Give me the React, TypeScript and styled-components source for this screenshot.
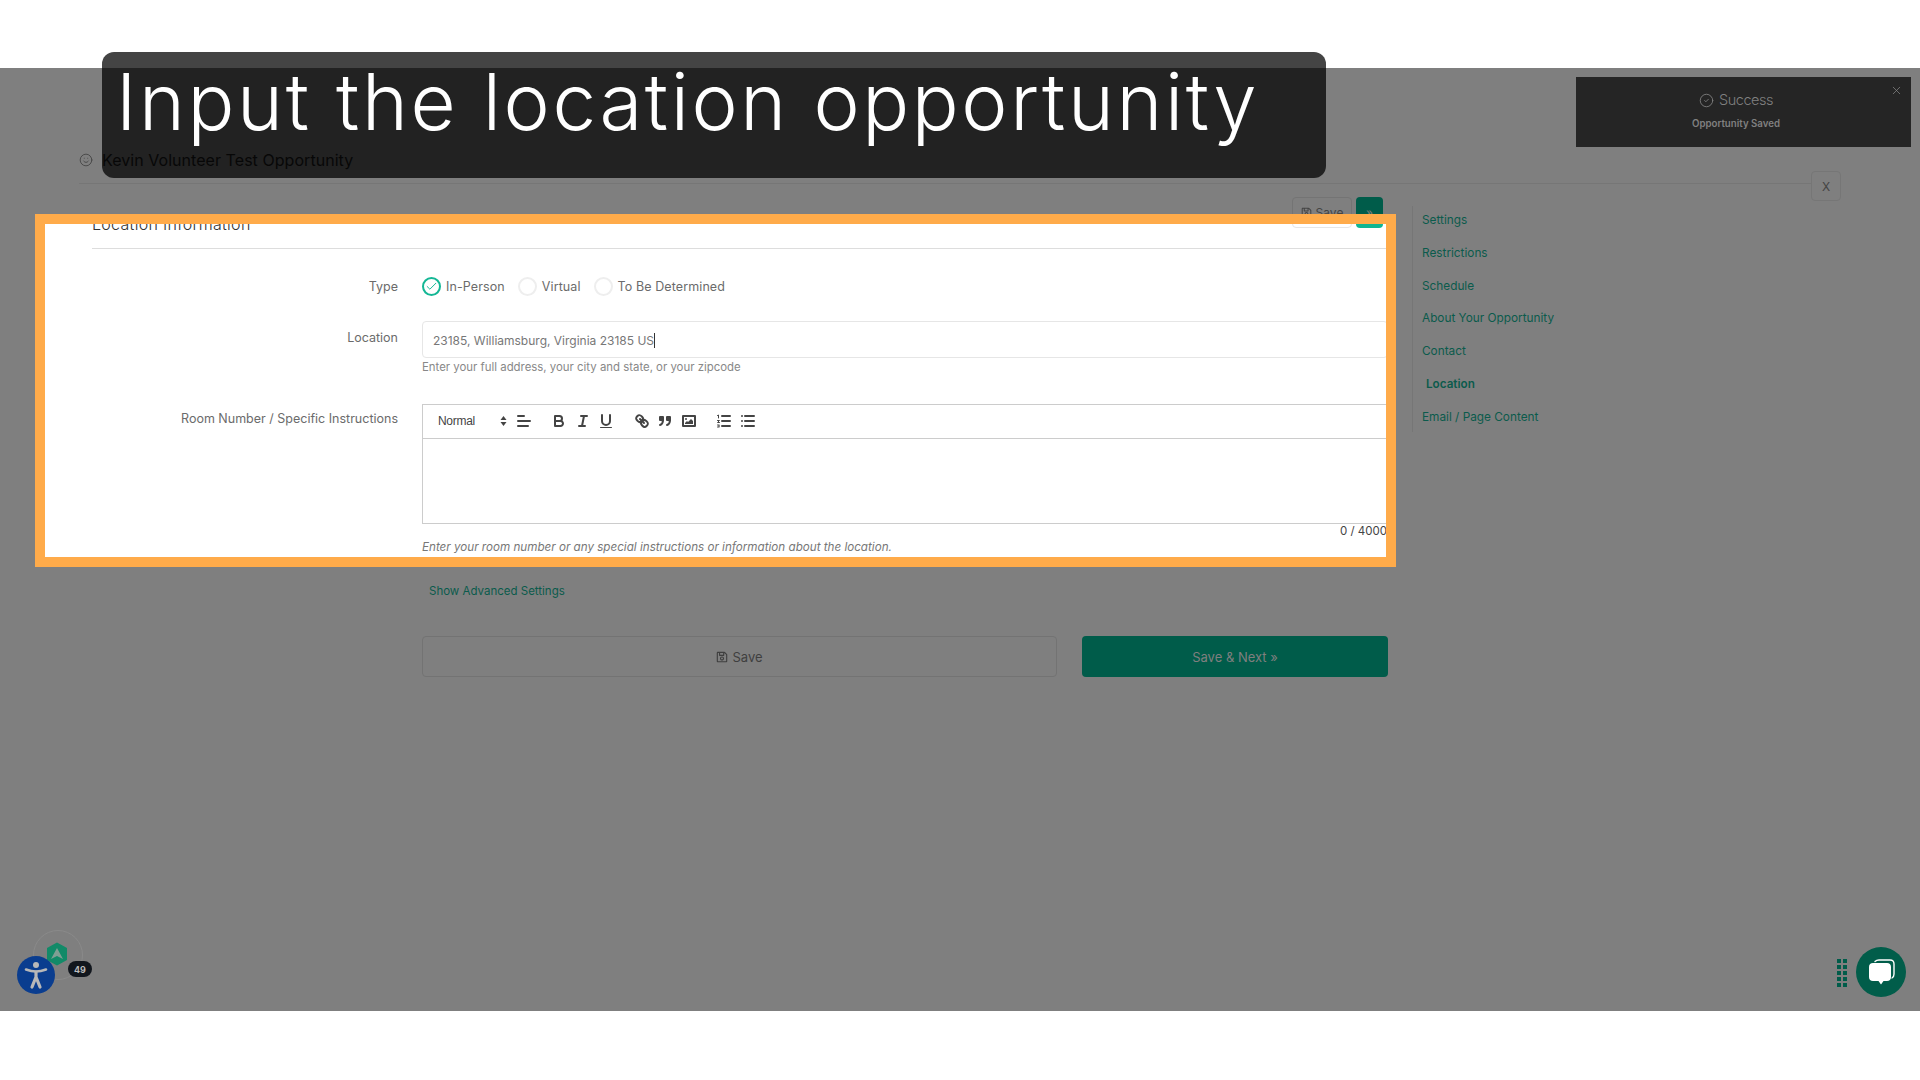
import type { FC } from 'react';
import styled, { createGlobalStyle } from 'styled-components';
import { Check, CircleCheck, Smile, X } from 'lucide-react';
import { FaRegSave } from 'react-icons/fa';

const FONT = `Inter, 'Noto Sans', sans-serif`;

const GlobalStyle = createGlobalStyle`
  html, body { margin: 0; padding: 0; background: #fff; }
  body { font-family: ${FONT}; }
`;

const NAV_ITEMS = [
  'Settings',
  'Restrictions',
  'Schedule',
  'About Your Opportunity',
  'Contact',
  'Location',
  'Email / Page Content',
];

const TYPE_OPTIONS = [
  { label: 'In-Person', checked: true },
  { label: 'Virtual', checked: false },
  { label: 'To Be Determined', checked: false },
];

const BoldIcon = () => (
  <QlIcon viewBox="0 0 18 18">
    <path d="M5,4H9.5A2.5,2.5,0,0,1,12,6.5v0A2.5,2.5,0,0,1,9.5,9H5A0,0,0,0,1,5,9V4A0,0,0,0,1,5,4Z" />
    <path d="M5,9h5.5A2.5,2.5,0,0,1,13,11.5v0A2.5,2.5,0,0,1,10.5,14H5a0,0,0,0,1,0,0V9A0,0,0,0,1,5,9Z" />
  </QlIcon>
);

const ItalicIcon = () => (
  <QlIcon viewBox="0 0 18 18">
    <path d="M7 4H13M5 14H11M8 14L10 4" />
  </QlIcon>
);

const UnderlineIcon = () => (
  <QlIcon viewBox="0 0 18 18">
    <path d="M5,3V9a4.012,4.012,0,0,0,4,4H9a4.012,4.012,0,0,0,4-4V3" />
    <rect x="3" y="15" width="12" height="1" rx="0.5" fill="#444" strokeWidth="0" />
  </QlIcon>
);

const LinkIcon = () => (
  <QlIcon viewBox="0 0 18 18">
    <path d="M7 7L11 11" />
    <path d="M8.9,4.577a3.476,3.476,0,0,1,.36,4.679A3.476,3.476,0,0,1,4.577,8.9C3.185,7.5,2.035,6.4,4.217,4.217S7.5,3.185,8.9,4.577Z" />
    <path d="M13.423,9.1a3.476,3.476,0,0,0-4.679-.36,3.476,3.476,0,0,0,.36,4.679c1.392,1.392,2.5,2.542,4.679.36S14.815,10.5,13.423,9.1Z" />
  </QlIcon>
);

const QuoteIcon = () => (
  <QlIcon viewBox="0 0 18 18">
    <rect x="4" y="5" width="3" height="3" fill="#444" />
    <rect x="11" y="5" width="3" height="3" fill="#444" />
    <path d="M7,8c0,4.031-3,5-3,5" />
    <path d="M14,8c0,4.031-3,5-3,5" />
  </QlIcon>
);

const ImageIcon = () => (
  <QlIcon viewBox="0 0 18 18">
    <rect x="3" y="4" width="12" height="10" />
    <circle cx="6" cy="7" r="1" fill="#444" strokeWidth="0" />
    <polygon points="5 12 5 11 7 9 8 10 11 7 13 9 13 12 5 12" fill="#444" strokeWidth="0" />
  </QlIcon>
);

const OrderedIcon = () => (
  <QlIcon viewBox="0 0 18 18">
    <path d="M7 4H15M7 9H15M7 14H15" />
    <path d="M2.5 3.5L3.5 3V6M2.5 8.5H4.5L2.5 10.5H4.5M2.5 13H4.5L3.5 14L4.5 15H2.5" strokeWidth="1" />
  </QlIcon>
);

const BulletIcon = () => (
  <QlIcon viewBox="0 0 18 18">
    <path d="M6 4H15M6 9H15M6 14H15M3 4H3M3 9H3M3 14H3" />
  </QlIcon>
);

const AlignIcon = () => (
  <QlIcon viewBox="0 0 18 18">
    <path d="M3 9H15M3 14H13M3 4H9" />
  </QlIcon>
);

const Editor: FC = () => (
  <EditorBox>
    <EditorToolbar>
      <HeaderPicker>
        Normal
        <svg width="7" height="12" viewBox="0 0 7 12">
          <path d="M3.5 1L6.5 5H0.5Z M3.5 11L0.5 7H6.5Z" fill="#444" />
        </svg>
      </HeaderPicker>
      <ToolGroup>
        <ToolButton><AlignIcon /></ToolButton>
      </ToolGroup>
      <ToolGroup>
        <ToolButton><BoldIcon /></ToolButton>
        <ToolButton><ItalicIcon /></ToolButton>
        <ToolButton><UnderlineIcon /></ToolButton>
      </ToolGroup>
      <ToolGroup>
        <ToolButton><LinkIcon /></ToolButton>
        <ToolButton><QuoteIcon /></ToolButton>
        <ToolButton><ImageIcon /></ToolButton>
      </ToolGroup>
      <ToolGroup>
        <ToolButton><OrderedIcon /></ToolButton>
        <ToolButton><BulletIcon /></ToolButton>
      </ToolGroup>
    </EditorToolbar>
  </EditorBox>
);

const HighlightedForm: FC = () => (
  <Highlight>
    <SectionHead>
      <SectionTitle>Location Information</SectionTitle>
      <HeadActions>
        <LightSave><FaRegSave size={11} /> Save</LightSave>
        <LightNext>»</LightNext>
      </HeadActions>
    </SectionHead>

    <TypeRow>
      <FieldLabel>Type</FieldLabel>
      <RadioList>
        {TYPE_OPTIONS.map((o) => (
          <RadioOption key={o.label}>
            <RadioCircle $checked={o.checked}>
              {o.checked && <Check size={13} strokeWidth={1.8} color="#14b795" />}
            </RadioCircle>
            {o.label}
          </RadioOption>
        ))}
      </RadioList>
    </TypeRow>

    <LocationRow>
      <FieldLabel $top={9}>Location</FieldLabel>
      <div>
        <TextField>
          23185, Williamsburg, Virginia 23185 US<Caret />
        </TextField>
        <Hint>Enter your full address, your city and state, or your zipcode</Hint>
      </div>
    </LocationRow>

    <RoomRow>
      <FieldLabel $top={7}>Room Number / Specific Instructions</FieldLabel>
      <div>
        <Editor />
        <Counter>0 / 4000</Counter>
        <ItalicHint>
          Enter your room number or any special instructions or information about the location.
        </ItalicHint>
      </div>
    </RoomRow>
  </Highlight>
);

export default function App() {
  return (
    <Page>
      <GlobalStyle />
      <TopBand />
      <Main>
        <PageHeader>
          <Smile size={14} color="#444" strokeWidth={1.5} />
          <PageTitle>Kevin Volunteer Test Opportunity</PageTitle>
        </PageHeader>
        <CloseBox>X</CloseBox>

        <Body>
          <LeftColumn>
            <DimActions>
              <DimSave><FaRegSave size={11} /> Save</DimSave>
              <DimNext>»</DimNext>
            </DimActions>

            <HighlightedForm />

            <AdvancedLink>Show Advanced Settings</AdvancedLink>
            <FormButtons>
              <SaveWide><FaRegSave size={12} /> Save</SaveWide>
              <SaveNext>Save &amp; Next »</SaveNext>
            </FormButtons>
          </LeftColumn>

          <SideNav>
            {NAV_ITEMS.map((item) => (
              <NavItem key={item} $active={item === 'Location'}>{item}</NavItem>
            ))}
          </SideNav>
        </Body>

        <ChatDots>
          {Array.from({ length: 10 }).map((_, i) => (
            <i key={i} />
          ))}
        </ChatDots>
        <ChatButton>
          <svg width="32" height="32" viewBox="0 0 32 32" fill="none">
            <path d="M10 5.5C11 4.5 12 4 14 4H25C27.5 4 29 5.5 29 8V18C29 20 28.3 21.3 27 22" stroke="#fff" strokeWidth="1.4" strokeLinecap="round" />
            <path d="M8 7H22C24.5 7 26 8.5 26 11V21C26 23.5 24.5 25 22 25H18.5L16 28.5L13.5 25H8C5.5 25 4 23.5 4 21V11C4 8.5 5.5 7 8 7Z" fill="#fff" />
          </svg>
        </ChatButton>

        <BadgeRing />
        <HexBadge>
          <svg width="22" height="24" viewBox="0 0 22 24">
            <path d="M11 0.5L21 6V18L11 23.5L1 18V6Z" fill="#128a68" />
            <path d="M11 6L17 17L11 14L5 17Z" fill="#7f9f94" />
          </svg>
        </HexBadge>
        <CountPill>49</CountPill>
        <AccessButton>
          <svg width="26" height="30" viewBox="0 0 26 30" fill="none" stroke="#b8b8b8" strokeLinecap="round">
            <circle cx="13" cy="5" r="3" fill="#b8b8b8" stroke="none" />
            <path d="M3 9.5C7 11 10 11.5 13 11.5C16 11.5 19 11 23 9.5" strokeWidth="2.6" />
            <path d="M13 12V17M13 17L9 27M13 17L17 27" strokeWidth="3.2" />
          </svg>
        </AccessButton>
      </Main>
      <BottomBand />

      <Caption>Input the location opportunity</Caption>
      <Toast>
        <ToastClose><X size={13} strokeWidth={1.3} /></ToastClose>
        <ToastTitle><CircleCheck size={15} strokeWidth={1.4} /> Success</ToastTitle>
        <ToastText>Opportunity Saved</ToastText>
      </Toast>
    </Page>
  );
}

const Page = styled.div`
  position: relative;
  width: 1920px;
  height: 1080px;
  display: flex;
  flex-direction: column;
  overflow: hidden;
`;

const TopBand = styled.div`
  height: 68px;
  background: #fff;
`;

const BottomBand = styled.div`
  height: 69px;
  background: #fff;
`;

const Main = styled.main`
  position: relative;
  flex: 1;
  background: #7f7f7f;
  padding-top: 76px;
`;

const PageHeader = styled.header`
  height: 40px;
  box-sizing: border-box;
  margin-left: 79px;
  margin-right: 109px;
  padding-bottom: 8px;
  display: flex;
  align-items: center;
  gap: 9px;
  border-bottom: 1px solid #767676;
`;

const PageTitle = styled.h1`
  margin: 0;
  font-size: 16px;
  font-weight: 400;
  color: #1c1c1c;
  letter-spacing: 0.05px;
`;

const CloseBox = styled.div`
  position: absolute;
  left: 1811px;
  top: 103px;
  width: 30px;
  height: 30px;
  box-sizing: border-box;
  border: 1px solid #767676;
  border-radius: 4px;
  display: flex;
  align-items: center;
  justify-content: center;
  font-size: 12px;
  color: #444;
`;

const Body = styled.div`
  display: flex;
  align-items: flex-start;
  padding-left: 35px;
`;

const LeftColumn = styled.div`
  width: 1361px;
  padding-top: 13px;
`;

const DimActions = styled.div`
  height: 17px;
  overflow: hidden;
  display: flex;
  justify-content: flex-end;
  gap: 4px;
  padding-right: 13px;
`;

const saveBase = `
  box-sizing: border-box;
  height: 31px;
  width: 60px;
  border-radius: 4px;
  display: flex;
  align-items: center;
  justify-content: center;
  gap: 4px;
  font-size: 12px;
`;

const nextBase = `
  box-sizing: border-box;
  height: 31px;
  width: 27px;
  border-radius: 4px;
  display: flex;
  align-items: center;
  justify-content: center;
  font-size: 12px;
`;

const DimSave = styled.div`
  ${saveBase}
  border: 1px solid #747474;
  color: #444;
`;

const DimNext = styled.div`
  ${nextBase}
  background: #005c4a;
  color: #7f7f7f;
`;

const Highlight = styled.section`
  box-sizing: border-box;
  height: 353px;
  border: 10px solid #ffab4a;
  background: #fff;
  overflow: hidden;
  padding-left: 47px;
`;

const SectionHead = styled.div`
  position: relative;
  margin-top: -27px;
  height: 52px;
  box-sizing: border-box;
  border-bottom: 1px solid #ddd;
  display: flex;
  justify-content: space-between;
  padding-right: 3px;
`;

const SectionTitle = styled.div`
  margin-top: 17px;
  font-size: 16px;
  line-height: 20px;
  font-weight: 300;
  color: #333;
  letter-spacing: 0.3px;
`;

const HeadActions = styled.div`
  display: flex;
  gap: 4px;
`;

const LightSave = styled.div`
  ${saveBase}
  border: 1px solid #e6e6e6;
  color: #777;
`;

const LightNext = styled.div`
  ${nextBase}
  background: #10b592;
  color: #fff;
`;

const FormRow = styled.div`
  display: grid;
  grid-template-columns: 306px 966px;
  column-gap: 24px;
`;

const TypeRow = styled(FormRow)`
  margin-top: 28px;
  align-items: center;
`;

const LocationRow = styled(FormRow)`
  margin-top: 25px;
`;

const RoomRow = styled(FormRow)`
  margin-top: 29px;
`;

const FieldLabel = styled.label<{ $top?: number }>`
  display: block;
  text-align: right;
  font-size: 12.5px;
  line-height: 16px;
  color: #6b6b6b;
  padding-top: ${(p) => p.$top ?? 0}px;
`;

const RadioList = styled.div`
  display: flex;
  align-items: center;
  gap: 13px;
`;

const RadioOption = styled.span`
  display: inline-flex;
  align-items: center;
  gap: 5px;
  font-size: 12.5px;
  line-height: 19px;
  color: #6b6b6b;
  letter-spacing: 0.1px;
`;

const RadioCircle = styled.span<{ $checked: boolean }>`
  box-sizing: border-box;
  width: 19px;
  height: 19px;
  border-radius: 50%;
  border: ${(p) => (p.$checked ? '2px solid #14b795' : '2px solid #eee')};
  display: flex;
  align-items: center;
  justify-content: center;
`;

const TextField = styled.div`
  box-sizing: border-box;
  height: 37px;
  border: 1px solid #e6e6e6;
  border-radius: 4px;
  padding-left: 10px;
  padding-top: 1px;
  display: flex;
  align-items: center;
  font-size: 12px;
  color: #777;
`;

const Caret = styled.span`
  width: 1px;
  height: 15px;
  background: #333;
`;

const Hint = styled.div`
  margin-top: 1px;
  font-size: 11.4px;
  line-height: 16px;
  color: #888;
`;

const EditorBox = styled.div`
  box-sizing: border-box;
  height: 120px;
  border: 1px solid #ccc;
  border-right: none;
`;

const EditorToolbar = styled.div`
  box-sizing: border-box;
  height: 34px;
  padding-bottom: 1px;
  border-bottom: 1px solid #ccc;
  display: flex;
  align-items: center;
  padding-left: 15px;
`;

const HeaderPicker = styled.div`
  width: 74px;
  box-sizing: border-box;
  padding-right: 5px;
  display: flex;
  align-items: center;
  justify-content: space-between;
  font-family: 'Liberation Sans', Arial, sans-serif;
  font-size: 12px;
  letter-spacing: -0.3px;
  color: #444;
`;

const ToolGroup = styled.div`
  display: flex;
  margin-right: 12px;
`;

const ToolButton = styled.span`
  width: 23.5px;
  height: 24px;
  display: flex;
  align-items: center;
  justify-content: center;
`;

const QlIcon = styled.svg`
  width: 18px;
  height: 18px;
  fill: none;
  stroke: #444;
  stroke-width: 2;
  stroke-linecap: round;
  stroke-linejoin: round;
`;

const Counter = styled.div`
  height: 15px;
  margin-top: -1px;
  margin-bottom: 1px;
  padding-right: 1px;
  text-align: right;
  font-size: 11.5px;
  line-height: 16px;
  color: #444;
`;

const ItalicHint = styled.div`
  font-size: 11.65px;
  line-height: 16px;
  font-style: italic;
  color: #777;
`;

const AdvancedLink = styled.div`
  margin-top: 16px;
  margin-left: 394px;
  font-size: 11.5px;
  line-height: 16px;
  color: #0b5b4c;
`;

const FormButtons = styled.div`
  margin-top: 37px;
  margin-left: 387px;
  display: flex;
  gap: 25px;
`;

const wideBase = `
  box-sizing: border-box;
  height: 41px;
  border-radius: 4px;
  display: flex;
  align-items: center;
  justify-content: center;
  gap: 4px;
  font-size: 13px;
`;

const SaveWide = styled.div`
  ${wideBase}
  width: 635px;
  border: 1px solid #737373;
  color: #3f3f3f;
`;

const SaveNext = styled.div`
  ${wideBase}
  width: 306px;
  background: #005c4a;
  color: #7f7f7f;
`;

const SideNav = styled.nav`
  margin-left: 16px;
  margin-top: 22px;
  height: 226px;
  border-left: 1px solid #767676;
  padding-left: 9px;
  display: flex;
  flex-direction: column;
  justify-content: space-between;
  padding-top: 6px;
  padding-bottom: 7px;
  box-sizing: border-box;
`;

const NavItem = styled.div<{ $active: boolean }>`
  font-size: ${(p) => (p.$active ? 11.7 : 11.8)}px;
  line-height: 16px;
  font-weight: ${(p) => (p.$active ? 600 : 400)};
  color: #0b5b4c;
  padding-left: ${(p) => (p.$active ? 4 : 0)}px;
`;

const ChatDots = styled.div`
  position: absolute;
  left: 1837px;
  top: 891px;
  display: grid;
  grid-template-columns: 4px 4px;
  grid-auto-rows: 4px;
  gap: 2px;
  i { background: #005c4a; }
`;

const ChatButton = styled.div`
  position: absolute;
  left: 1856px;
  top: 879px;
  width: 50px;
  height: 50px;
  border-radius: 50%;
  background: #015d4a;
  display: flex;
  align-items: center;
  justify-content: center;
`;

const BadgeRing = styled.div`
  position: absolute;
  left: 33px;
  top: 862px;
  width: 48px;
  height: 48px;
  border-radius: 50%;
  border: 1px solid #8a8a8a;
`;

const HexBadge = styled.div`
  position: absolute;
  left: 46px;
  top: 874px;
  display: flex;
`;

const CountPill = styled.div`
  position: absolute;
  left: 68px;
  top: 893px;
  width: 24px;
  height: 16px;
  border-radius: 8px;
  background: #11161d;
  color: #bbb;
  font-size: 9px;
  font-weight: 700;
  display: flex;
  align-items: center;
  justify-content: center;
`;

const AccessButton = styled.div`
  position: absolute;
  left: 17px;
  top: 888px;
  width: 38px;
  height: 38px;
  border-radius: 50%;
  background: #0a3d8f;
  display: flex;
  align-items: center;
  justify-content: center;
`;

const Caption = styled.div`
  position: absolute;
  left: 102px;
  top: 52px;
  width: 1224px;
  height: 126px;
  box-sizing: border-box;
  padding-left: 14px;
  border-radius: 12px;
  background: rgba(0, 0, 0, 0.733);
  color: #fff;
  font-size: 78px;
  font-weight: 300;
  line-height: 100px;
  white-space: nowrap;
  letter-spacing: 2.6px;
`;

const Toast = styled.aside`
  position: absolute;
  left: 1576px;
  top: 77px;
  width: 335px;
  height: 70px;
  box-sizing: border-box;
  padding-right: 15px;
  background: #252525;
  color: #808080;
  display: flex;
  flex-direction: column;
  align-items: center;
`;

const ToastClose = styled.span`
  position: absolute;
  right: 8px;
  top: 7px;
  display: flex;
  color: #8a8a8a;
`;

const ToastTitle = styled.div`
  margin-top: 13px;
  display: flex;
  align-items: center;
  gap: 5px;
  font-size: 14.5px;
  letter-spacing: -0.5px;
  line-height: 20px;
  font-weight: 300;
`;

const ToastText = styled.div`
  margin-top: 7px;
  font-size: 9.7px;
  line-height: 14px;
  font-weight: 600;
`;
